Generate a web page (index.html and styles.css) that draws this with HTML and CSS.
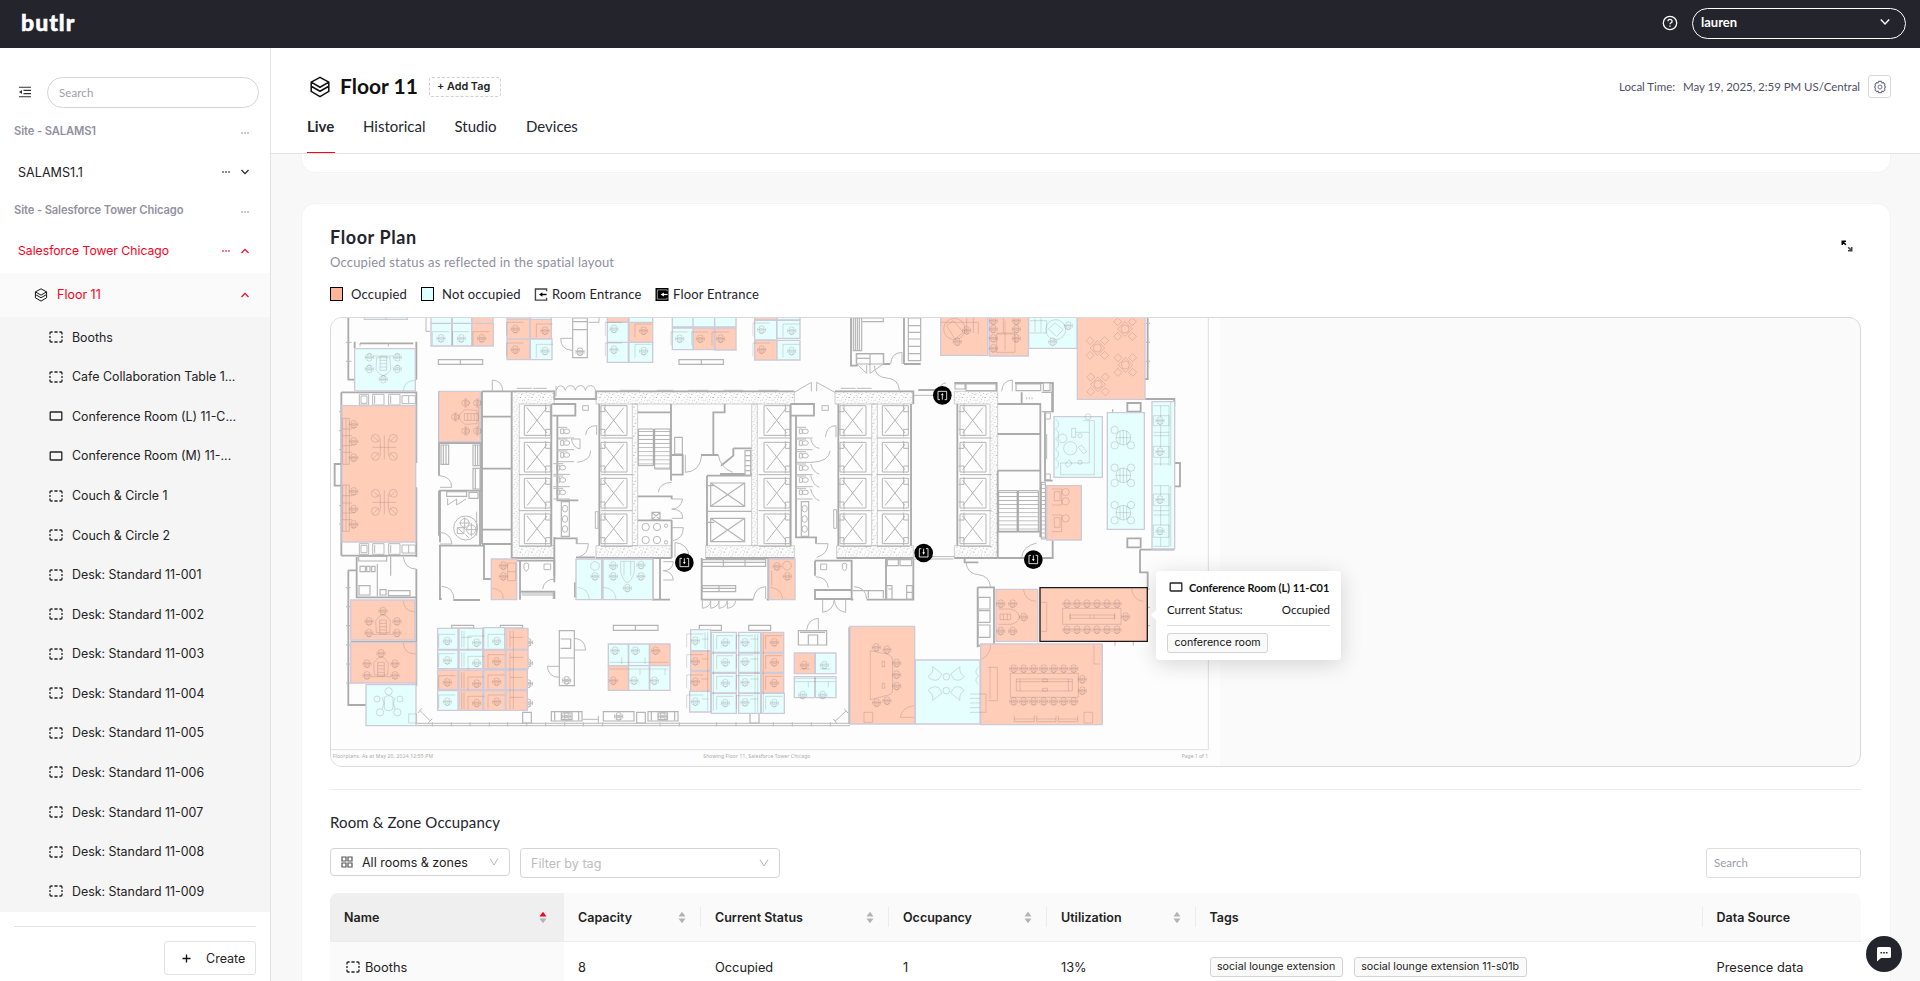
FILE: index.html
```html
<!DOCTYPE html>
<html lang="en">
<head>
<meta charset="utf-8">
<title>butlr - Floor 11</title>
<link rel="stylesheet" href="styles.css">
</head>
<body>
<svg class="sprite" width="0" height="0">
  <defs>
    <symbol id="i-zone" viewBox="0 0 14 12"><path d="M1 3.6V2.2Q1 1 2.2 1h1.4M5.4 1h3.2M10.4 1h1.4Q13 1 13 2.2v1.4M13 8.4v1.4Q13 11 11.800 11h-1.400M8.600 11H5.400M3.600 11H2.200Q1 11 1 9.800V8.400M1 5v2M13 5v2" fill="none" stroke="#222" stroke-width="1.3"/></symbol>
    <symbol id="i-room" viewBox="0 0 14 12"><rect x="1.200" y="2" width="11.600" height="8" rx=".6" fill="none" stroke="#222" stroke-width="1.300"/></symbol>
    <symbol id="i-layers" viewBox="0 0 20 20"><path d="M10 1.200 18 5.600 10 10.200 2 5.600zM2 5.600v3.700l8 4.600 8-4.600V5.600M2 9.300V14l8 4.700 8-4.700V9.300" fill="none" stroke="#111" stroke-width="1.400" stroke-linejoin="round"/></symbol>
    <symbol id="i-down" viewBox="0 0 10 10"><path d="M1.500 3 5 6.700 8.500 3" fill="none" stroke="currentColor" stroke-width="1.200"/></symbol>
    <symbol id="i-up" viewBox="0 0 10 10"><path d="M1.500 7 5 3.300 8.500 7" fill="none" stroke="currentColor" stroke-width="1.200"/></symbol>
    <symbol id="i-dots" viewBox="0 0 8 4"><path d="M.3 1.300h1.400v1.400H.3zM3.300 1.300h1.400v1.400H3.300zM6.300 1.300h1.400v1.400H6.300z" fill="currentColor"/></symbol>
    <symbol id="i-sort" viewBox="0 0 8 14"><path class="sort-up" d="M4 .8 7.800 6H.2z"/><path class="sort-down" d="M4 13.200 7.800 8H.2z"/></symbol>
  </defs>
</svg>

<header class="topbar">
  <div class="logo">butlr</div>
  <div class="topbar-right">
    <svg class="help" viewBox="0 0 16 16"><circle cx="8" cy="8" r="6.700" fill="none" stroke="#fff" stroke-width="1.300"/><path d="M5.900 6.300Q6 4.300 8 4.300t2.100 1.900Q10.100 7.400 8.800 8 8 8.400 8 9.300" fill="none" stroke="#fff" stroke-width="1.300"/><path d="M7.300 10.400h1.400v1.400H7.300z" fill="#fff"/></svg>
    <div class="user-select"><span>lauren</span><svg width="12" height="12"><use href="#i-down"/></svg></div>
  </div>
</header>

<div class="app">
  <aside class="sidebar">
    <div class="side-search">
      <svg width="14" height="12" viewBox="0 0 14 12"><path d="M1 1.200h12M5.500 4.400H13M5.500 7.600H13M1 10.800h12" stroke="#333" stroke-width="1.100"/><path d="M1 6 4 3.900v4.200z" fill="#333"/></svg>
      <div class="search-pill">Search</div>
    </div>
    <div class="site site-1"><span>Site - SALAMS1</span><svg class="dots"><use href="#i-dots"/></svg></div>
    <div class="building b-1"><span>SALAMS1.1</span><svg class="dots"><use href="#i-dots"/></svg><svg class="arrow"><use href="#i-down"/></svg></div>
    <div class="site site-2"><span>Site - Salesforce Tower Chicago</span><svg class="dots"><use href="#i-dots"/></svg></div>
    <div class="building b-2 red"><span>Salesforce Tower Chicago</span><svg class="dots"><use href="#i-dots"/></svg><svg class="arrow"><use href="#i-up"/></svg></div>
    <div class="floor-row red"><svg class="layers"><use href="#i-layers"/></svg><span>Floor 11</span><svg class="arrow"><use href="#i-up"/></svg></div>
    <ul class="spaces">
      <li><svg><use href="#i-zone"/></svg>Booths</li>
      <li><svg><use href="#i-zone"/></svg>Cafe Collaboration Table 1...</li>
      <li><svg><use href="#i-room"/></svg>Conference Room (L) 11-C...</li>
      <li><svg><use href="#i-room"/></svg>Conference Room (M) 11-...</li>
      <li><svg><use href="#i-zone"/></svg>Couch &amp; Circle 1</li>
      <li><svg><use href="#i-zone"/></svg>Couch &amp; Circle 2</li>
      <li><svg><use href="#i-zone"/></svg>Desk: Standard 11-001</li>
      <li><svg><use href="#i-zone"/></svg>Desk: Standard 11-002</li>
      <li><svg><use href="#i-zone"/></svg>Desk: Standard 11-003</li>
      <li><svg><use href="#i-zone"/></svg>Desk: Standard 11-004</li>
      <li><svg><use href="#i-zone"/></svg>Desk: Standard 11-005</li>
      <li><svg><use href="#i-zone"/></svg>Desk: Standard 11-006</li>
      <li><svg><use href="#i-zone"/></svg>Desk: Standard 11-007</li>
      <li><svg><use href="#i-zone"/></svg>Desk: Standard 11-008</li>
      <li><svg><use href="#i-zone"/></svg>Desk: Standard 11-009</li>
    </ul>
    <div class="side-foot"><div class="create"><svg width="9" height="9" viewBox="0 0 9 9"><path d="M4.500.5v8M.5 4.500h8" stroke="#111" stroke-width="1.300"/></svg><span>Create</span></div></div>
  </aside>

  <main class="main">
    <div class="page-head">
      <div class="title-row">
        <svg class="title-icon"><use href="#i-layers"/></svg>
        <h1>Floor 11</h1>
        <div class="add-tag">+ Add Tag</div>
        <div class="local-time"><span>Local Time:</span><span>May 19, 2025, 2:59 PM US/Central</span></div>
        <div class="gear"><svg width="14" height="14" viewBox="0 0 14 14"><path d="M5.700 1.400h2.600l.6 1.500 1.600-.3 1.500 1.700-.5 1.500 1 1.200-1 1.300.5 1.500-1.500 1.700-1.600-.3-.6 1.400H5.700l-.6-1.400-1.600.3L2 9.800l.5-1.500-1-1.300 1-1.200L2 4.300l1.500-1.700 1.600.3z" fill="none" stroke="#737387" stroke-width="1.100"/><circle cx="7" cy="7" r="2" fill="none" stroke="#737387"/></svg></div>
      </div>
      <nav class="tabs"><span class="active">Live</span><span class="t-hist">Historical</span><span class="t-studio">Studio</span><span class="t-dev">Devices</span></nav>
    </div>

    <div class="content">
      <section class="card card-prev"></section>
      <section class="card card-main">
        <div class="card-head"><h2>Floor Plan</h2>
          <svg width="12" height="12" viewBox="0 0 12 12"><path d="M1.300 5V1.300H5M1.500 1.500l3.300 3.300" fill="none" stroke="#000" stroke-width="1.600"/><path d="M10.700 7v3.700H7M10.500 10.500 7.200 7.200" fill="none" stroke="#444" stroke-width="1.600"/></svg>
        </div>
        <p class="sub">Occupied status as reflected in the spatial layout</p>
        <div class="legend">
          <i class="sw occ"></i><span class="l1">Occupied</span>
          <i class="sw free"></i><span class="l2">Not occupied</span>
          <svg class="ent" viewBox="0 0 14 14"><path d="M13 3.500V1H1v12h12v-2.500" fill="none" stroke="#444" stroke-width="1.500"/><path d="M13 7H8" stroke="#000" stroke-width="1.500"/><path d="M5 7l3.500-2.500v5z"/></svg><span class="l3">Room Entrance</span>
          <svg class="ent" viewBox="0 0 14 14"><path d="M0 0h14v14H0z"/><path d="M12.500 3.500V2H2v10h10.500v-1.500" fill="none" stroke="#999"/><path d="M13 7H8" stroke="#fff" stroke-width="1.300"/><path d="M5.500 7 9 4.800v4.400z" fill="#fff"/></svg><span class="l4">Floor Entrance</span>
        </div>

        <div class="plan">
<svg class="plan-svg" viewBox="33 27 4587 1344" width="1529" height="448">
<defs>
  <pattern id="speck" width="34" height="29" patternUnits="userSpaceOnUse"><path d="M3 4h3v2H3zM12 9h2v2h-2zM22 3h3v3h-3zM29 13h2v2h-2zM6 18h2v2H6zM17 20h3v2h-3zM26 24h3v2h-3zM10 26h2v2h-2zM20 12h2v2h-2zM1 11h2v2H1zM15 2h2v2h-2zM30 20h2v2h-2zM11 15h2v2h-2z" fill="#8c8c8c"/></pattern>
  <pattern id="steps" width="12" height="12.200" patternUnits="userSpaceOnUse"><path d="M0 1h12" stroke="#aaa" stroke-width="2.500"/></pattern>
  <g id="lift"><path d="M0 0h78v89H0zM8 6l60 76M68 6 8 82M64-4v22h16M64 93V71h16M-16 97h98" /></g>
  <g id="liftL"><path d="M0 0h78v89H0zM8 6l60 76M68 6 8 82M12-4v22H-4M12 93V71H-4M0 97h95"/></g>
  <g id="shaft"><use href="#lift" y="290"/><use href="#lift" y="400"/><use href="#lift" y="508"/><use href="#lift" y="615"/></g>
  <g id="shaftL"><use href="#liftL" y="290"/><use href="#liftL" y="400"/><use href="#liftL" y="508"/><use href="#liftL" y="615"/></g>
  <g id="ch"><path d="M-7-9Q0-14 7-9V5Q5 11 0 11T-7 5zM-12-5v11M12-5v11M-12 0H12M-9 8Q0 16 9 8M-5-3H5M-5 4H5"/></g>
  <g id="dk"><use href="#ch"/><path d="M-26-20H24M-26-20V20"/></g>
  <g id="quad"><circle cx="-27" cy="-27" r="12"/><circle cx="27" cy="-27" r="12"/><circle cx="-27" cy="27" r="12"/><circle cx="27" cy="27" r="12"/><path d="M0-36V36M-36 0H36M-12-25v50M12-25v50M-34-34l16 16M34-34 18-18M-34 34l16-16M34 34 18 18"/></g>
  <g id="cafe"><circle r="12"/><path d="M0-22 22 0 0 22-22 0zM-34-22l12-12 12 12-12 12zM34-22 22-34 10-22l12 12zM-34 22l12 12 12-12-12-12zM34 22 22 34 10 22l12-12z"/></g>
  <g id="meet"><use href="#ch" x="-42" y="-6"/><use href="#ch" x="42" y="-6"/><use href="#ch" x="-42" y="29"/><use href="#ch" x="42" y="29"/><use href="#ch" y="-37"/><path d="M-20 28-22-8Q0-44 22-8L20 28zM-10-10H10V32H-10zM-10 0H10M-10 10H10M-10 20H10M-30 33H30"/></g>
  <g id="wc"><ellipse cx="18" cy="0" rx="9" ry="7"/><path d="M0-7h9V7H0zM-10-12h30M-10 20h50"/></g>
  <g id="cab"><path d="M0 0h28v32H0zM5 5h18v22H5zM40 0h34v32H40zM46 4v24M88 0h34v32H88zM94 4v24M128 4h40v24h-40zM148 4v24"/></g>
</defs>

<path d="M0 0H2700V1400H0z" fill="#fdfdfd"/>
<path d="M2665 27V1322M33 1322H2665" fill="none" stroke="#dedede" stroke-width="3"/>

<!-- concrete core -->
<g fill="url(#speck)" stroke="#bbb" stroke-width="2">
  <path d="M575 247H703V285H598V710H703V747H575z"/>
  <path d="M828 247H1423V285H828zM828 710H1055V747H828zM1157 710H1423V747H1157zM937 285H953V710H937zM1295 285H1312V710H1295z"/>
  <path d="M1545 247H1780V285H1545zM1550 710H1780V747H1550zM1655 285H1672V710H1655z"/>
  <path d="M1903 247H2033V747H1903V710H2010V285H1903z"/>
</g>
<g fill="none" stroke="#b4b4b4" stroke-width="3">
  <use href="#shaft" x="613"/><use href="#shaftL" x="843"/><use href="#shaft" x="1332"/><use href="#shaftL" x="1560"/><use href="#shaft" x="1687"/><use href="#shaftL" x="1920"/>
</g>

<!-- heavy walls -->
<g fill="none" stroke="#ababab" stroke-width="5.500">
  <path d="M694 285V710M838 285V710M1412 285V710M1555 285V710M1773 285V710M1912 285V710M575 247H703V270H828V247H1423M1545 247H1780V285M575 747H703M828 747H1055M1157 747H1423M1550 747H1780M1903 747H2033"/>
  <path d="M486 247V705M486 323H574M486 479H574M486 662H574M486 705H574M575 247V747M486 247H575"/>
  <path d="M697 285H766V320H697M712 322V574H775M703 688H770V704M703 684V820"/>
  <path d="M1413 285H1482V320H1413M1428 322V685H1488V704"/>
  <path d="M953 310H1053M1053 285V515M1002 360V470M1053 438H1088V497H1053M953 562H1055V570M953 634H1055M1055 634V747M1214 285V310H1180V438H1143M1180 438H1195"/>
  <path d="M1240 418H1295M1240 418V440L1203 470M1200 495H1295M1161 500V710M1161 500H1295"/>
  <path d="M2033 285H2161V485H2033M2033 375H2161M2033 485V747M2161 485V685M2175 310V515H2198M2105 250V285M2198 220V310M2033 668H2160M2093 545V668"/>
  <path d="M289 98V212M104 118V98M85 27V212H104M120 103H280M64 250H289V290M64 250V290M289 290V462M289 535V744M64 740H289M64 465H44V530H64M64 290V740"/>
  <path d="M357 247V500M357 402H483V545H360V700M357 545V680M480 545V710M357 710H492V810H514M360 710V870M400 873H480M357 870H365"/>
  <path d="M85 784V1188H138M85 784H110V744M110 744V865H289M289 780V1120M92 998H289M289 1080V1130"/>
  <path d="M590 755H703V800M600 848H703V870M703 755V780M600 755V872M768 745H825M765 820V865"/>
  <path d="M1145 747V872H1300M1340 872H1345V750M998 750V872H1050M1020 750V870"/>
  <path d="M1485 755H1595V843H1485V870H1595V843M1485 755V800M1595 755V872H1600M1640 872H1698V750M1780 750V872H1700"/>
  <path d="M1593 27V170H1610V135H1690V168M1653 27V38M1693 165H1710M1655 135V165M1655 27H1690M1655 27V30M1646 165H1652M1795 243H1880V265M1653 135V138M1650 27H1660M1752 165V27"/>
  <path d="M1752 165H1802M1903 222H2030V247M2085 222H2198V310M2483 27V210H2463V270H2563V290M2422 282H2462V308H2422zM2422 688H2462V715H2422zM2563 462H2580V532H2563M2460 722H2563M2460 722V790H2483V835M1973 835V1015M1973 835H2022V1010H1973M1934 747V760H1975"/>
  <path d="M1590 955H1785M1588 955V1245M1979 1070V1245M2345 1005V1245M2033 747H2198V690M2198 747V690"/>
</g>
<g fill="#fdfdfd" stroke="#b4b4b4" stroke-width="3.500">
  <path d="M355 152H488V166H355zM421 152V166M1077 152H1210V166H1077zM1144 152V166M395 949H461V957H395zM541 949H608V957H541zM880 949H1014V964H880zM946 949V964M1138 949H1204V964H1138zM1286 949H1352V964H1286z"/>
  <path d="M758 27H802V146H758zM758 62H802M758 38H802M718 965H763V1130H718zM718 1047H763M722 990H752V1018H722M1435 965H1520V1008H1435zM1440 970H1515M1465 1008V978H1493V1008"/>
  <path d="M608 1210H634V1242H608zM950 1210H976V1242H950zM1290 1210H1317V1242H1290zM694 1208H786V1236H694zM704 1210V1234M776 1210V1234M724 1212H756V1232H724zM850 1208H942V1236H850zM984 1208H1074V1236H984zM994 1210V1234M1014 1212H1042V1232H1014zM1064 1210V1234"/>
  <path d="M116 742H200V756H116zM212 742V800M120 772H136V788H120zM140 772H150V788H140zM155 772H165V788H155zM117 830H150V858H117zM180 842H198V858H180zM205 845H270V860H205zM172 765V862"/>
  <path d="M363 408H386V466H363zM370 408V466M378 408V466M459 408H480V470H459zM466 408V470M473 408V470M459 478H480V540H459zM466 478V540M380 548H440V562H380zM447 550H474V568H447z"/>
  <path d="M724 578H748V682H724zM1444 578H1466V682H1444zM605 852H700V870M605 858H700M1147 752H1337V772H1147zM1210 752V772M1275 752V772M1147 760H1337M1147 830H1247V848H1147zM1197 830V848M1147 838H1247"/>
  <path d="M1600 27H1625V125H1600zM1606 27V125M1612 27V125M1618 27V125M1610 135H1690V165H1610zM1650 135V165M1610 148H1650M1628 27H1690V38H1628M1765 27H1802V155H1765zM1765 50H1802M1765 70H1802M1765 90H1802M1765 112H1802M1765 134H1802"/>
  <path d="M1598 845H1690V868M1645 845V868M1700 752H1775M1702 750H1735V770H1702zM1740 750H1775V770H1740zM1700 830H1716V870H1700zM1760 830H1777V870H1760zM1705 840H1716M1760 850H1777"/>
  <path d="M1938 225H2028V245H1938zM1905 225H1935V240H1905zM2088 225H2162V245H2088zM2170 222H2190V245H2170zM2165 250H2195V308H2165M1275 425H1292V498H1275zM1275 440H1292M1275 455H1292M1275 470H1292M1275 485H1292M1064 385H1087V435H1064zM996 610H1020V632H996zM996 610 1020 632M1020 610 996 632"/>
  <path d="M1975 865H2010V900H1975zM1975 905H2010V940H1975zM1975 948H2010V985H1975zM2378 300V315M1172 522H1274V592H1172zM1172 522 1274 592M1274 522 1172 592M1172 628H1274V698H1172zM1172 628 1274 698M1274 628 1172 698M1161 607H1295M1162 530H1182M1162 640H1182"/>
</g>
<path d="M955 360H1000V470H955zM1004 360H1050V480H1004zM2036 545H2092V668H2036zM2095 545H2155V668H2095zM2164 520H2176V690H2164z" fill="url(#steps)" stroke="#aaa" stroke-width="3"/>
<!-- doors and fittings -->
<g fill="none" stroke="#bababa" stroke-width="3">
  <path d="M517 247V213Q548 215 548 247M708 232V262M708 244Q712 230 722 230T736 244Q740 230 752 230T766 244Q770 230 782 230T796 244Q800 230 812 230T826 244V268M722 88Q722 122 756 124M722 88H757M797 378Q800 350 830 350V378M754 390H780V420Q758 415 754 390M812 425Q812 455 772 460M770 685V704H805Q805 735 775 745M357 500Q395 502 395 535H360M360 670Q392 672 396 705H360M365 832Q402 835 402 872M250 744Q255 780 289 780"/>
  <path d="M1096 438V490Q1140 488 1145 440M1015 550Q1018 522 1055 520M1055 570H1088Q1082 600 1055 600Q1090 602 1088 628H1055M1055 656H1090Q1090 690 1058 695M1065 745V700Q1105 705 1108 745M1195 438Q1200 475 1238 490M1423 250 1474 220V247M1545 250 1490 220V247M1516 384Q1520 350 1548 350V384M1472 390Q1478 415 1498 418M1530 425Q1528 458 1475 460M1472 465Q1480 490 1498 495M1472 500Q1480 530 1498 535M1472 540Q1480 570 1498 575M1488 704H1524Q1524 735 1490 745"/>
  <path d="M1663 170Q1665 205 1700 207Q1736 210 1738 243M1610 165 1640 193V168M1690 165 1650 193V168M1712 165Q1713 132 1746 130V165M2045 247Q2047 215 2077 213V247M2105 745Q2108 712 2150 702M1938 760Q1942 795 1975 797Q2008 800 2012 835M1860 240Q1862 222 1878 222M668 840Q672 812 703 810M1487 803Q1522 805 1525 836M1602 833Q1638 835 1640 870M1300 870Q1305 835 1337 833V870M1460 962Q1465 930 1495 928V962M718 1105Q685 1105 682 1072H718M763 988Q795 990 797 1023H763M1030 758H1060Q1058 785 1030 785Q1058 788 1060 813H1030M1508 872V910Q1540 905 1543 872M1577 872V910Q1545 905 1543 872M1147 875V898Q1170 895 1172 875V898Q1195 895 1197 875V898Q1220 895 1222 875V898Q1245 895 1247 875M383 568V588L410 570V588L438 570"/>
  <path d="M590 238H635M640 238H680M900 244H960M1010 244H1060M1105 244H1165M1210 244H1270M1315 244H1375M1563 238H1607M1612 238H1655M1780 259H1840M1780 743H1905M1780 750H1900"/>
  <path d="M289 1243H1590M289 1250H1590M337 1240V1252M394 1240V1252M450 1240V1252M508 1240V1252M563 1240V1252M620 1240V1252M677 1240V1252M734 1240V1252M790 1240V1252M848 1240V1252M1020 1240V1252M1078 1240V1252M1190 1240V1252M1248 1240V1252M1360 1240V1252M1417 1240V1252M1474 1240V1252M1531 1240V1252"/>
  <path d="M300 1205 330 1235M294 1212 305 1198M325 1241 337 1229M1545 1237 1578 1206M1540 1230 1550 1243M1572 1199 1584 1212M788 1231H835M835 1220V1242M78 100H95M78 157H95M78 836H92M78 893H92M78 950H92M78 1008H92M78 1065H92M78 1122H92M57 308H66M57 365H66M57 422H66M57 590H66M57 645H66M2478 43H2490M2478 100H2490M2478 157H2490M2483 840H2490M2483 895H2490M2483 950H2490M2385 998V1010M2440 998V1010"/>
  <use href="#wc" x="722" y="367"/><use href="#wc" x="722" y="402"/><use href="#wc" x="722" y="438"/><use href="#wc" x="710" y="476"/><use href="#wc" x="710" y="513"/><use href="#wc" x="710" y="550"/>
  <use href="#wc" x="1438" y="367"/><use href="#wc" x="1438" y="402"/><use href="#wc" x="1438" y="440"/><use href="#wc" x="1438" y="477"/><use href="#wc" x="1438" y="513"/><use href="#wc" x="1438" y="550"/>
  <ellipse cx="735" cy="599" rx="8" ry="10"/><ellipse cx="735" cy="630" rx="8" ry="10"/><ellipse cx="735" cy="660" rx="8" ry="10"/><ellipse cx="1454" cy="599" rx="8" ry="10"/><ellipse cx="1454" cy="630" rx="8" ry="10"/><ellipse cx="1454" cy="660" rx="8" ry="10"/>
  <circle cx="977" cy="654" r="11"/><circle cx="1011" cy="654" r="11"/><circle cx="977" cy="693" r="11"/><circle cx="1011" cy="693" r="11"/><circle cx="1038" cy="650" r="5"/><circle cx="1038" cy="700" r="5"/>
  <circle cx="437" cy="657" r="36"/><circle cx="434" cy="642" r="13"/><circle cx="454" cy="662" r="14"/><path d="M434 625V660M418 642H450M454 642V682M436 662H474M412 656H432V674H412zM412 656 432 674M436 676 446 686M470 608V680"/>
  <path d="M788 290H805V304H788zM1506 290H1525V304H1506zM612 765Q618 758 626 765V778Q618 795 612 778zM672 765H692V782H672zM1502 765H1520V782H1502zM1567 765Q1573 760 1580 765V778Q1573 792 1567 778zM826 608H834V658H826zM1541 602H1550V658H1541zM318 27V67H330M805 40H837V27M120 103V112M205 103V112"/>
  <use href="#cab" x="118" y="256"/><use href="#cab" x="118" y="704"/>
  <use href="#ch" x="780" y="128"/><use href="#ch" x="740" y="1114"/><use href="#ch" x="740" y="1222"/><use href="#ch" x="896" y="1222"/><use href="#ch" x="1028" y="1222"/>
  <use href="#ch" x="625" y="1000"/><use href="#ch" x="625" y="1062"/><use href="#ch" x="625" y="1124"/><use href="#ch" x="625" y="1182"/>
  <path d="M2177 312H2191V330H2177zM2177 495H2191V512H2177zM2120 265v6M2128 265v6M2136 265v6M2180 375V450"/>
</g>

<!-- occupied spaces -->
<g class="occ-shape">
  <path d="M455 24H519V43H455zM455 43H520V111H455zM561 24H629V31H561zM561 31H629V90H561zM631 31H694V90H631zM561 90H629V152H561zM862 24H925V40H862zM927 40H998V100H927zM1120 57H1183V122H1120zM1185 57H1248V123H1185zM1304 24H1370V33H1304zM1304 94H1370V153H1304z"/>
  <path d="M66 290H287V699H66zM357 247H481V398H357zM1862 24H2003V139H1862zM2008 24H2125V141H2008zM2272 24H2475V271H2272zM2180 530H2284V693H2180z"/>
  <path d="M92 873H284V993H92zM92 1000H288V1122H92zM514 750H590V872H514zM558 958H624V1021H558zM491 1023H556V1079H491zM558 1023H624V1079H558zM353 1083H414V1142H353zM417 1083H488V1142H417zM491 1083H556V1142H491zM558 1083H622V1142H558zM417 1145H488V1204H417zM491 1145H556V1204H491zM558 1145H622V1204H558z"/>
  <path d="M989 1005H1050V1070H989zM865 1070H925V1144H865zM1347 750H1425V872H1347zM1112 1027H1172V1085H1112zM1112 1087H1172V1147H1112zM1324 970H1391V1030H1324zM1324 1032H1391V1090H1324zM1324 1093H1391V1152H1324zM1423 1032H1484V1094H1423zM1590 952H1784V1245H1590z"/>
  <path d="M2028 841H2153V997H2028zM1982 1005H2346V1247H1982z"/>
</g>
<!-- free spaces -->
<g class="free-shape">
  <path d="M133 24H197V31H133zM197 24H262V31H197zM333 24H395V43H333zM397 24H455V43H397zM333 43H395V111H333zM397 43H455V111H397zM631 24H694V31H631zM631 90H696V152H631zM927 24H998V40H927zM862 40H925V100H862zM862 100H925V160H862zM927 100H998V160H927z"/>
  <path d="M1057 24H1119V54H1057zM1119 24H1184V54H1119zM1184 24H1248V54H1184zM1057 57H1119V122H1057zM1371 24H1440V33H1371zM1304 34H1370V93H1304zM1371 34H1440V88H1371zM1371 94H1440V153H1371z"/>
  <path d="M104 119H286V246H104zM2126 24H2271V118H2126zM2202 323H2347V505H2202zM2362 311H2473V661H2362zM2496 278H2564V720H2496z"/>
  <path d="M138 1127H288V1250H138zM768 750H845V872H768zM849 750H998V872H849zM353 958H414V1021H353zM417 958H488V1021H417zM491 956H554V1021H491zM353 1023H414V1079H353zM417 1023H488V1079H417zM353 1145H414V1204H353z"/>
  <path d="M865 1005H925V1070H865zM926 1005H988V1070H926zM926 1070H988V1144H926zM989 1070H1050V1144H989zM1112 962H1172V1025H1112zM1109 1147H1172V1209H1109zM1174 970H1249V1030H1174zM1174 1032H1249V1090H1174zM1174 1093H1249V1152H1174zM1174 1153H1249V1213H1174z"/>
  <path d="M1256 970H1322V1030H1256zM1256 1032H1322V1090H1256zM1256 1093H1322V1152H1256zM1256 1153H1322V1213H1256zM1324 1153H1393V1213H1324zM1486 1032H1548V1094H1486zM1423 1103H1484V1166H1423zM1486 1103H1548V1166H1486zM1786 1053H1980V1245H1786z"/>
</g>
<path d="M2160 836H2482V997H2160z" fill="#ffcdb8" stroke="#1c1c1c" stroke-width="4"/>

<!-- furniture -->
<g class="furn">
  <use href="#dk" x="363" y="88"/><use href="#dk" x="424" y="88"/><use href="#dk" x="485" y="88"/><use href="#dk" x="586" y="60"/><use href="#dk" x="675" y="65"/><use href="#dk" x="586" y="122"/><use href="#dk" x="675" y="126"/><use href="#dk" x="882" y="60"/><use href="#dk" x="971" y="65"/><use href="#dk" x="882" y="122"/><use href="#dk" x="971" y="126"/>
  <use href="#dk" x="1079" y="89"/><use href="#dk" x="1141" y="89"/><use href="#dk" x="1202" y="89"/><use href="#dk" x="1325" y="62"/><use href="#dk" x="1415" y="65"/><use href="#dk" x="1325" y="122"/><use href="#dk" x="1415" y="126"/>
  <g transform="rotate(180 190 174)"><use href="#meet" x="190" y="174"/></g>
  <use href="#quad" x="193" y="415"/><use href="#quad" x="193" y="580"/>
  <path d="M68 328H88V466H68zM68 360H96M68 380H96M68 410H96M68 430H96M78 328V466M68 528H88V667H68zM68 560H96M68 582H96M68 612H96M68 632H96M78 528V667"/>
  <use href="#ch" x="101" y="346"/><use href="#ch" x="101" y="397"/><use href="#ch" x="101" y="446"/><use href="#ch" x="101" y="547"/><use href="#ch" x="101" y="600"/><use href="#ch" x="101" y="646"/>
  <g transform="rotate(-90 437 324)"><use href="#meet" x="437" y="330"/></g>
  <path d="M1862 40H1975V75M1880 50 1900 35 1930 70 1905 90zM1940 27V72M1960 27V72M2030 75H2085V130H2030zM2055 35V125M2030 72H2085M2050 27V72M2130 35H2180V72H2130M2185 60 2205 42 2230 62 2210 82zM2145 27V70M2163 27V70"/>
  <circle cx="1903" cy="60" r="32"/><circle cx="2207" cy="62" r="30"/>
  <use href="#ch" x="1912" y="98"/><use href="#ch" x="1940" y="64"/><use href="#ch" x="2198" y="98"/><use href="#ch" x="2245" y="50"/>
  <use href="#ch" x="2020" y="35"/><use href="#ch" x="2020" y="60"/><use href="#ch" x="2020" y="88"/><use href="#ch" x="2020" y="118"/><use href="#ch" x="2089" y="35"/><use href="#ch" x="2089" y="60"/><use href="#ch" x="2089" y="88"/>
  <use href="#cafe" x="2332" y="117"/><use href="#cafe" x="2415" y="60"/><use href="#cafe" x="2416" y="168"/><use href="#cafe" x="2334" y="226"/>
  <circle cx="2251" cy="418" r="20"/><circle cx="2228" cy="388" r="13"/><circle cx="2280" cy="380" r="6"/><circle cx="2280" cy="460" r="6"/><circle cx="2304" cy="323" r="9"/><path d="M2290 335H2323V497H2222V462H2308V335M2255 358H2267V385H2255zM2267 370H2308M2275 415 2285 408 2300 428 2290 434zM2235 465 2248 452 2256 465 2242 475zM2207 330Q2225 345 2207 360Q2225 375 2207 390Q2225 405 2207 420Q2225 435 2207 450Q2225 465 2207 480"/>
  <g id="lounge"><circle cx="2410" cy="386" r="22"/><circle cx="2384" cy="363" r="11"/><circle cx="2384" cy="409" r="11"/><circle cx="2433" cy="409" r="11"/><path d="M2400 366V406M2410 364V408M2420 366V406M2388 386H2432"/></g>
  <use href="#lounge" y="113"/><circle cx="2433" cy="476" r="11"/><use href="#lounge" y="225"/><circle cx="2433" cy="588" r="11"/>
  <path d="M2500 290H2547V470M2500 320H2547V350H2500zM2500 370H2547M2500 380H2547M2500 412H2547V445H2500zM2500 465H2547M2522 290V325M2522 350V415M2522 445V470M2500 530H2547V712H2500M2500 555H2547V590H2500zM2500 605H2547M2500 618H2547M2500 648H2547V685H2500zM2522 530V560M2522 590V650M2522 685V712M2552 278V470M2552 530V712"/>
  <use href="#ch" x="2520" y="335"/><use href="#ch" x="2520" y="428"/><use href="#ch" x="2520" y="572"/><use href="#ch" x="2520" y="666"/>
  <circle cx="2237" cy="549" r="11"/><circle cx="2237" cy="577" r="11"/><circle cx="2237" cy="628" r="11"/><path d="M2196 540H2225V588H2196M2203 548H2220V575H2203zM2196 618H2225V668H2196M2203 626H2220V655H2203z"/>
  <use href="#meet" x="189" y="943"/><use href="#meet" x="183" y="1070"/>
  <circle cx="206" cy="1147" r="11"/><circle cx="171" cy="1170" r="9"/><circle cx="240" cy="1170" r="9"/><circle cx="180" cy="1210" r="11"/><circle cx="232" cy="1210" r="11"/><path d="M193 1165Q206 1155 219 1165V1200Q206 1210 193 1200zM187 1165Q196 1184 187 1200M225 1165Q216 1184 225 1200M266 1215H290V1242H266zM250 875Q252 908 284 908M250 1002Q252 1035 287 1035M250 246Q252 215 284 214"/>
  <use href="#dk" x="382" y="996"/><use href="#dk" x="382" y="1054"/><use href="#dk" x="382" y="1120"/><use href="#dk" x="382" y="1178"/><use href="#dk" x="470" y="1001"/><use href="#dk" x="470" y="1062"/><use href="#dk" x="470" y="1124"/><use href="#dk" x="470" y="1182"/><use href="#dk" x="530" y="996"/><use href="#dk" x="530" y="1057"/><use href="#dk" x="530" y="1118"/><use href="#dk" x="530" y="1178"/>
  <path d="M425 965V1015M432 965V1015M425 1030V1075M432 1030V1075M425 1090V1138M432 1090V1138M425 1150V1200M432 1150V1200M570 965V1015M580 965V1200M425 985H455M570 985H610M570 1045H610M570 1105H610M570 1165H610M570 1030V1200"/>
  <use href="#ch" x="550" y="770"/><use href="#ch" x="550" y="802"/><path d="M563 762H587V815H563zM563 788H587M517 838Q550 840 550 870M772 835Q805 838 808 870M850 835Q885 838 888 870M1350 835Q1385 838 1388 870"/>
  <circle cx="825" cy="771" r="13"/><use href="#ch" x="825" y="802"/><use href="#ch" x="880" y="770"/><use href="#ch" x="880" y="802"/><use href="#ch" x="963" y="768"/><use href="#ch" x="963" y="802"/><use href="#ch" x="922" y="837"/><path d="M902 757H943V790Q922 850 902 790zM912 757V800M932 757V800"/>
  <use href="#ch" x="885" y="1025"/><use href="#ch" x="946" y="1025"/><use href="#ch" x="1007" y="1025"/><use href="#ch" x="880" y="1115"/><use href="#ch" x="942" y="1115"/><use href="#ch" x="1003" y="1115"/><path d="M868 1060H1045M868 1080H1045M905 1045V1065M975 1045V1065M960 1080V1098M1035 1080V1098"/>
  <use href="#ch" x="1371" y="772"/><use href="#ch" x="1402" y="802"/><circle cx="1401" cy="770" r="13"/><path d="M1355 785V830"/>
  <use href="#dk" x="1126" y="995"/><use href="#dk" x="1126" y="1057"/><use href="#dk" x="1126" y="1118"/><use href="#dk" x="1126" y="1178"/><use href="#dk" x="1216" y="1000"/><use href="#dk" x="1216" y="1060"/><use href="#dk" x="1216" y="1122"/><use href="#dk" x="1216" y="1182"/><use href="#dk" x="1275" y="1000"/><use href="#dk" x="1275" y="1058"/><use href="#dk" x="1275" y="1120"/><use href="#dk" x="1275" y="1180"/><use href="#dk" x="1363" y="1000"/><use href="#dk" x="1363" y="1060"/><use href="#dk" x="1363" y="1122"/><use href="#dk" x="1363" y="1182"/>
  <path d="M1155 970V1020M1163 970V1205M1180 975V1205M1305 975V1210M1313 975V1210M1330 975V1210M1145 990H1165M1145 1050H1165M1145 1110H1165M1145 1170H1165M1290 990H1315M1290 1050H1315M1290 1110H1315M1290 1170H1315"/>
  <use href="#ch" x="1453" y="1068"/><use href="#ch" x="1513" y="1068"/><use href="#ch" x="1448" y="1158"/><use href="#ch" x="1508" y="1158"/><path d="M1425 1118H1545M1425 1108H1545M1440 1080H1470M1500 1080H1530M1465 1118V1135M1525 1118V1135"/>
  <path d="M1651 1025 1700 1035Q1718 1040 1718 1055V1140Q1718 1155 1705 1158L1651 1172zM1687 1057H1694V1073H1687zM1687 1123H1694V1138H1687zM1632 1210H1658V1240H1632zM1782 1190Q1745 1195 1741 1225H1782"/>
  <use href="#ch" x="1669" y="1015"/><use href="#ch" x="1701" y="1022"/><use href="#ch" x="1730" y="1062"/><use href="#ch" x="1730" y="1097"/><use href="#ch" x="1730" y="1131"/><use href="#ch" x="1701" y="1175"/><use href="#ch" x="1670" y="1181"/>
  <circle cx="1879" cy="1103" r="10"/><circle cx="1879" cy="1145" r="10"/>
  <g id="seats"><path d="M1838 1073 1866 1095 1855 1112Q1835 1118 1824 1102Q1842 1092 1838 1073zM1920 1073 1892 1095 1903 1112Q1923 1118 1932 1102Q1916 1092 1920 1073z"/></g>
  <g transform="translate(0 2247) scale(1 -1)"><use href="#seats"/></g>
  <path d="M1950 1155H1998V1210H1950M1950 1168H1980M1950 1182H1980M1950 1196H1980M1975 1075Q1960 1090 1975 1100Q1960 1115 1975 1125M2005 1075H2032V1175H2005M2010 1075V1170M2322 1008V1065H2340M1985 1050Q2010 1040 2012 1008"/>
  <use href="#ch" x="2042" y="884"/><use href="#ch" x="2078" y="884"/><use href="#ch" x="2042" y="966"/><use href="#ch" x="2078" y="966"/><use href="#ch" x="2111" y="924"/><path d="M2036 900H2072Q2095 905 2098 924Q2095 942 2072 946H2036M2040 915H2072V932H2040zM2050 915V932M2062 915V932M2110 841Q2115 875 2148 877M2160 880H2180V967H2160M2435 838Q2437 872 2470 877"/>
  <g id="row6"><use href="#ch" x="2241" y="884"/><use href="#ch" x="2271" y="884"/><use href="#ch" x="2301" y="884"/><use href="#ch" x="2331" y="884"/><use href="#ch" x="2361" y="884"/><use href="#ch" x="2391" y="884"/></g><use href="#row6" y="78"/><use href="#ch" x="2417" y="923"/>
  <path d="M2228 898H2403V946H2228zM2250 912V934M2384 912V934M2250 918H2384V928H2250zM2310 918V928M2322 918V928"/>
  <use href="#row6" x="-160" y="195"/><use href="#ch" x="2261" y="1079"/><use href="#row6" x="-160" y="293"/><use href="#ch" x="2261" y="1177"/><use href="#ch" x="2287" y="1111"/><use href="#ch" x="2287" y="1145"/>
  <path d="M2071 1093H2275V1165H2071zM2089 1110H2257V1146H2089zM2089 1118H2257M2100 1110V1146M2168 1110H2182V1118H2168zM2168 1138H2182V1146H2168zM2245 1110V1146M2083 1220V1238H2143V1220M2083 1230H2143M2150 1220V1238H2208V1220M2150 1230H2208M2215 1220V1238H2273V1220M2215 1230H2273M2292 1210H2318V1242H2292z"/>
</g>

<g class="plan-note">
  <text x="38" y="1348" textLength="301">Floorplans. As at May 20, 2024 12:55 PM</text>
  <text x="1150" y="1348" textLength="321">Showing Floor 11, Salesforce Tower Chicago</text>
  <text x="2585" y="1348" textLength="79">Page 1 of 1</text>
</g>

<g id="pin" transform="translate(1093 761)"><circle r="28"/><path d="M-7-13h-6v25h26v-25H7" fill="none" stroke="#fff" stroke-width="2.500"/><path d="M0-13V0" stroke="#fff" stroke-width="2.500"/><path d="M-4-2H4L0 5z" fill="#fff"/></g>
<use href="#pin" x="718" y="-29"/>
<use href="#pin" x="1047" y="-9"/>
<g transform="translate(1867 259)"><circle r="28"/><path d="M-7 13h-6v-25h26v25H7" fill="none" stroke="#fff" stroke-width="2.500"/><path d="M0 13V0" stroke="#fff" stroke-width="2.500"/><path d="M-4 0H4L0-7z" fill="#fff"/></g>
</svg>
          <div class="tip">
            <div class="tip-title"><svg width="14" height="12"><use href="#i-room"/></svg><span>Conference Room (L) 11-C01</span></div>
            <div class="tip-row"><span>Current Status:</span><span>Occupied</span></div>
            <div class="tip-tags"><span class="tag">conference room</span></div>
          </div>
        </div>

        <div class="rule"></div>
        <h3>Room &amp; Zone Occupancy</h3>
        <div class="filters">
          <div class="select s-rooms"><svg width="12" height="12" viewBox="0 0 12 12"><path d="M1 1h4v4H1zM7 1h4v4H7zM1 7h4v4H1zM7 7h4v4H7z" fill="none" stroke="#555" stroke-width="1.200"/></svg><span>All rooms &amp; zones</span><svg class="chev" viewBox="0 0 10 10"><path d="M1 1.500 5 8l4-6.500" fill="none" stroke="#b5b5b5"/></svg></div>
          <div class="select s-tags"><span>Filter by tag</span><svg class="chev" viewBox="0 0 10 10"><path d="M1 1.500 5 8l4-6.500" fill="none" stroke="#b5b5b5"/></svg></div>
          <div class="table-search">Search</div>
        </div>

        <div class="table">
          <div class="tr th">
            <div class="td sorted"><span>Name</span><svg class="sort"><use href="#i-sort"/></svg></div>
            <div class="td"><span>Capacity</span><svg class="sort"><use href="#i-sort"/></svg></div>
            <div class="td"><span>Current Status</span><svg class="sort"><use href="#i-sort"/></svg></div>
            <div class="td"><span>Occupancy</span><svg class="sort"><use href="#i-sort"/></svg></div>
            <div class="td"><span>Utilization</span><svg class="sort"><use href="#i-sort"/></svg></div>
            <div class="td"><span>Tags</span></div>
            <div class="td"><span>Data Source</span></div>
          </div>
          <div class="tr">
            <div class="td name"><svg width="14" height="12"><use href="#i-zone"/></svg>Booths</div>
            <div class="td">8</div>
            <div class="td">Occupied</div>
            <div class="td">1</div>
            <div class="td">13%</div>
            <div class="td tags"><span class="tag">social lounge extension</span><span class="tag">social lounge extension 11-s01b</span></div>
            <div class="td">Presence data</div>
          </div>
        </div>
      </section>
    </div>
  </main>
</div>
<div class="chat"><svg width="16" height="16" viewBox="0 0 16 16"><path d="M2.500 1h11Q15 1 15 2.500v8Q15 12 13.500 12H5l-4 3.500v-13Q1 1 2.500 1z" fill="#fff"/><path d="M4.500 6h1.600v1.600H4.500zM7.200 6h1.600v1.600H7.200zM9.900 6h1.600v1.600H9.900z" fill="#24242d"/></svg></div>
</body>
</html>
```
FILE: styles.css
```css
* { box-sizing: border-box; }
body { margin: 0; height: 981px; overflow: hidden; position: relative; background: #f8f8f8; color: #222; font-family: Inter, "Liberation Sans", sans-serif; font-size: 12.800px; }
h1, h2, h3, p, ul { margin: 0; padding: 0; font-weight: 400; }
svg { flex: none; display: block; }
.sprite { position: absolute; }

.topbar { height: 48px; background: #24242d; display: flex; justify-content: space-between; align-items: center; padding: 0 14px 0 21px; color: #fff; }
.logo { font: 900 23px/28px Lato, sans-serif; letter-spacing: 1px; -webkit-text-stroke: .5px #fff; padding-bottom: 5px; }
.topbar-right { display: flex; align-items: center; gap: 14px; padding-bottom: 2px; }
.help { width: 16px; height: 16px; }
.user-select { width: 214px; height: 31px; border: 1px solid #fff; border-radius: 16px; display: flex; align-items: center; justify-content: space-between; padding: 0 14px 2px 8px; font: 700 13px Lato, sans-serif; }

.app { display: flex; height: 933px; }
.sidebar { width: 271px; flex: none; border-right: 1px solid #e3e3e3; background: #fff; display: flex; flex-direction: column; }
.side-search { display: flex; align-items: center; gap: 15px; padding: 29px 0 0 18px; }
.side-search svg { margin-top: -2px; }
.search-pill { width: 212px; height: 31px; border: 1px solid #d5d5d9; border-radius: 16px; padding: 0 11px; font: 11.500px/29px Lato, sans-serif; letter-spacing: .1px; color: #9d9dab; }
.site, .building { display: flex; align-items: center; padding: 0 21px 0 14px; }
.site { font-weight: 600; font-size: 11.200px; letter-spacing: -.12px; color: #9191a0; }
.site span, .building span, .floor-row span { flex: 1; }
.site-1 { height: 46px; }
.site-1 .dots, .site-2 .dots { margin-top: 4px; }
.dots { width: 8px; height: 4px; }
.arrow { width: 10px; height: 10px; }
.building { padding-left: 18px; padding-right: 20px; gap: 10px; font-size: 12.200px; }
.b-1 { height: 36px; font-size: 12.600px; }
.site-2 { height: 41px; padding-bottom: 1px; }
.b-2 { height: 42px; padding-bottom: 3px; }
.red { color: #fb0020; }
.floor-row { height: 44px; background: #fafafa; display: flex; align-items: center; padding: 0 20px 1px 34px; font-size: 12.500px; }
.layers { width: 14px; height: 14px; margin-right: 9px; }
.spaces { list-style: none; background: #f5f5f5; height: 594.500px; padding-top: .5px; }
.spaces li { height: 39.570px; display: flex; align-items: center; padding-left: 49px; gap: 9px; font-size: 12.400px; }
.spaces svg { width: 14px; height: 12px; }
.side-foot { margin: 14px 14px 0; border-top: 1px solid #e3e3e3; display: flex; justify-content: flex-end; padding-top: 14.500px; }
.create { width: 92px; height: 34px; border: 1px solid #e3e3e6; border-radius: 3px; display: flex; align-items: center; gap: 15px; padding-left: 17px; font-size: 12.500px; }

.main { flex: 1; min-width: 0; }
.page-head { height: 106px; background: #fff; border-bottom: 1px solid #e3e3e3; padding: 27px 29px 0 36px; }
.title-row { display: flex; align-items: center; height: 23px; }
.title-icon { width: 22px; height: 22px; margin: 0 9px 0 2px; }
h1 { font: 700 21px/24px Lato, sans-serif; width: 89px; color: #111; white-space: nowrap; margin-top: -2px; }
.add-tag { width: 72px; height: 20px; margin-top: 1px; border: 1px dashed #d0d0d0; border-radius: 3px; font: 600 10.800px/18px Inter, sans-serif; padding-left: 7px; white-space: nowrap; }
.local-time { margin-left: auto; display: flex; gap: 8px; font: 400 11.500px Lato, sans-serif; letter-spacing: -.05px; color: #4f4f64; }
.gear { width: 23px; height: 23px; border: 1px solid #d6d6dc; border-radius: 3px; margin-left: 8px; display: grid; place-items: center; }
.tabs { display: flex; height: 55px; font: 15px/56px Lato, sans-serif; color: #26262e; }
.tabs span { white-space: nowrap; height: 55px; }
.tabs .active { width: 28px; font-weight: 700; border-bottom: 1px solid #fb0020; margin-right: 28px; }
.t-hist { width: 91.500px; }
.t-studio { width: 71.500px; }

.content { padding: 0 29px 0 30px; height: 827px; overflow: hidden; display: flex; flex-direction: column; gap: 30px; }
.card { background: #fff; border: 1px solid #f3f3f3; border-radius: 14px; flex: none; }
.card-prev { height: 19px; border-top: 0; border-radius: 0 0 14px 14px; }
.card-main { height: 830px; padding: 19px 29px 0 28px; }
.card-head { display: flex; justify-content: space-between; align-items: center; height: 28px; padding-right: 8px; }
.card-head svg { margin-top: 18px; }
h2 { font: 700 18px/26px Lato, sans-serif; letter-spacing: .6px; color: #24242d; }
.sub { font: 13px/20px Lato, sans-serif; letter-spacing: .17px; color: #8f8fa1; padding-top: 1px; height: 21px; }
.legend { display: flex; align-items: center; height: 20px; margin-top: 12px; font: 13px Lato, sans-serif; letter-spacing: .2px; color: #24242d; white-space: nowrap; }
.sw { width: 13px; height: 14px; border: 1px solid #000; margin-right: 8px; }
.occ { background: #ffb797; }
.free { background: #ddffff; }
.ent { width: 14px; height: 13px; margin-right: 4px; }
.l1 { width: 70px; } .l2 { width: 92px; } .l3 { width: 103px; }

.plan { position: relative; margin-top: 13px; height: 450px; border: 1px solid #d9d9d9; border-radius: 12px; background: #fafafa; }
.plan-svg { border-radius: 11px; }
.occ-shape { fill: #ffcdb8; stroke: #cfc9d8; stroke-width: 4px; }
.free-shape { fill: #e5fffe; stroke: #cfc9d8; stroke-width: 4px; }
.furn { fill: none; stroke: #6e6464; stroke-opacity: .27; stroke-width: 2.500px; }
.plan-note { font: 15px "Noto Sans", sans-serif; fill: #aaa; }

/* tooltip for the selected room, to the right of it */
.tip { position: absolute; left: 825px; top: 253px; width: 185px; height: 89px; border-radius: 4px; background: #fff; box-shadow: 0 4px 22px rgba(0, 0, 0, .16); padding: 9px 11px; font: 12px Lato, sans-serif; color: #111; }
.tip::before { content: ""; position: absolute; left: -5px; top: 38px; border: solid transparent; border-width: 6px 6px 6px 0; border-right-color: #fff; }
.tip-title { display: flex; gap: 6px; align-items: center; font-weight: 700; font-size: 11px; letter-spacing: -.05px; height: 14px; padding-left: 2px; white-space: nowrap; }
.tip-row { display: flex; justify-content: space-between; align-items: center; height: 32px; border-bottom: 1px solid #ddd; font-size: 11.500px; }
.tip-tags { padding-top: 7px; display: flex; }
.tag { height: 20px; line-height: 18px; border: 1px solid #d3d3d3; border-radius: 3px; background: #fafafa; padding: 0 6.500px; font-family: Inter, sans-serif; font-size: 10.650px; white-space: nowrap; }

.rule { height: 1px; background: #ececec; margin-top: 22px; }
h3 { font: 15px/20px Lato, sans-serif; letter-spacing: .12px; padding-top: 22px; color: #24242d; }
.filters { display: flex; margin-top: 16px; height: 30px; gap: 10px; }
.select { border: 1px solid #d4d4d4; border-radius: 4px; display: flex; align-items: center; height: 28px; padding: 0 10px; }
.s-rooms { width: 180px; gap: 9px; font-size: 12.500px; }
.s-tags { width: 260px; height: 30px; color: #bcbcbc; font-size: 12.600px; }
.chev { width: 10px; height: 10px; margin-left: auto; }
.table-search { margin-left: auto; width: 155px; height: 30px; border: 1px solid #dddde2; border-radius: 3px; padding-left: 7px; font: 11.500px/28px Lato, sans-serif; color: #9d9dab; }

.table { margin-top: 15px; }
.tr { display: grid; grid-template-columns: 234px 137px 188px 158px 148.500px 507px 1fr; height: 50px; }
.td { display: flex; align-items: center; padding: 0 14px; }
.th { height: 49px; background: #fafafa; border-bottom: 1px solid #ececec; border-radius: 8px 8px 0 0; font-weight: 600; overflow: hidden; font-size: 12.500px; }
.th .td { justify-content: space-between; padding-right: 15px; background: linear-gradient(#ececec, #ececec) right center / 1px 20px no-repeat; }
.th .td:last-child { background: none; }
.th .td.sorted { background: #efefef; padding-right: 17px; }
.sort { width: 8px; height: 13px; fill: #b3b3b3; }
.sorted .sort { --up: #fb0020; }
.sort-up { fill: var(--up, #b3b3b3); }
.name { background: #fafafa; gap: 5px; padding-left: 16px; }
.tags { gap: 11px; }

.chat { position: absolute; left: 1866px; top: 936px; width: 36px; height: 36px; border-radius: 50%; background: #24242d; display: grid; place-items: center; }
```
